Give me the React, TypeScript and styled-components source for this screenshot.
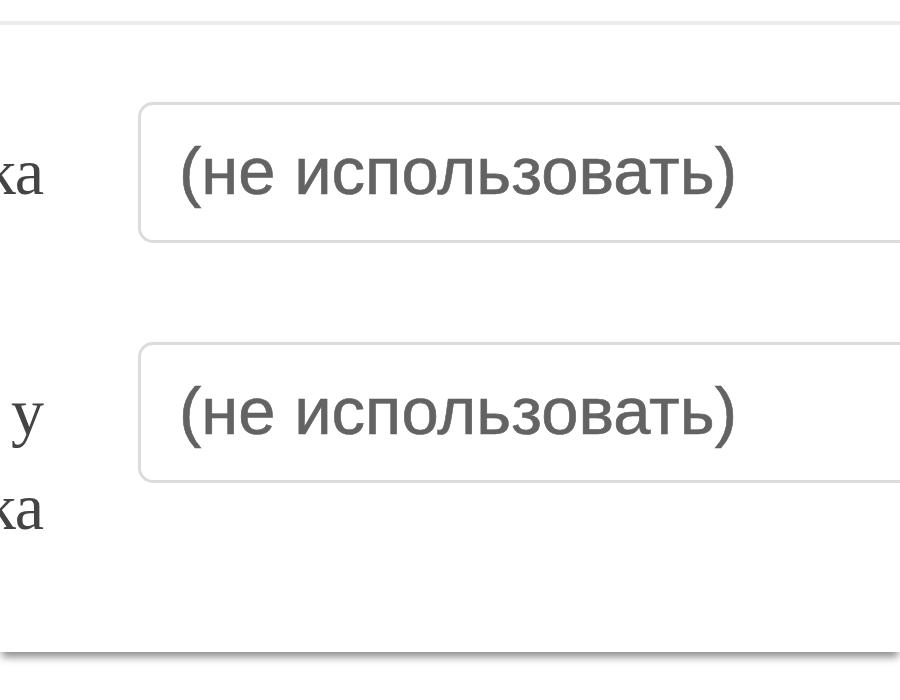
import React from 'react';
import styled, { createGlobalStyle } from 'styled-components';

const GlobalStyle = createGlobalStyle`
  html, body {
    margin: 0;
    padding: 0;
    background: #ffffff;
    overflow: hidden;
  }
  body {
    width: 900px;
    height: 700px;
  }
`;

// Panel that holds the form rows
const Panel = styled.div`
  margin-top: 21px;
  padding: 77px 0 98px;
  background: #ffffff;
  border-top: 4px solid #ececec;
  box-shadow: 0 7px 8px -2px rgba(0, 0, 0, 0.45);
  display: flex;
  flex-direction: column;
  gap: 99px;
`;

const Row = styled.div`
  display: flex;
  align-items: baseline;
  gap: 94px;
`;

// label column is narrow, text sits on its right edge and runs off to the left
const Label = styled.div`
  width: 44px;
  flex: none;
  display: flex;
  flex-direction: column;
  align-items: flex-end;
  font-family: "Liberation Serif", "Times New Roman", serif;
  font-size: 66px;
  line-height: 95px;
  color: #444444;
`;

const LabelLine = styled.span`
  white-space: nowrap;
`;

const SelectBox = styled.div`
  flex: 1;
  margin-right: -80px;
  height: 135px;
  padding-left: 38px;
  border: 3px solid #dcdcdc;
  border-radius: 15px;
  font-family: "Liberation Sans", Arial, sans-serif;
  font-size: 67px;
  line-height: 131px;
  color: #636363;
  -webkit-text-stroke: 0.6px #636363;
  white-space: nowrap;
`;

type Field = { label: string[]; value: string };

const fields: Field[] = [
  { label: ['Группировка'], value: '(не использовать)' },
  { label: ['Группировка у', 'заголовка'], value: '(не использовать)' },
];

const App: React.FC = () => {
  return (
    <>
      <GlobalStyle />
      <Panel>
        {fields.map((f, i) => (
          <Row key={i}>
            <Label>
              {f.label.map((line, j) => (
                <LabelLine key={j}>{line}</LabelLine>
              ))}
            </Label>
            <SelectBox>{f.value}</SelectBox>
          </Row>
        ))}
      </Panel>
    </>
  );
};

export default App;
